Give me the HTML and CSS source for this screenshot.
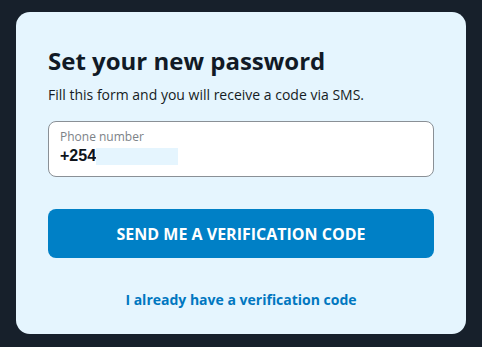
FILE: index.html
```html
<!DOCTYPE html>
<html>
<head>
<meta charset="utf-8">
<link rel="stylesheet" href="styles.css">
</head>
<body>
<div class="card">
  <h1 class="title">Set your new password</h1>
  <p class="subtitle">Fill this form and you will receive a code via SMS.</p>
  <div class="field">
    <span class="label">Phone number</span>
    <div class="value"><span class="prefix">+254</span><span class="fill"></span></div>
  </div>
  <button class="primary">SEND ME A VERIFICATION CODE</button>
  <a class="link">I already have a verification code</a>
</div>
</body>
</html>
```
FILE: styles.css
```css
html, body {
  margin: 0;
  background: #17202b;
  height: 100%;
}
body {
  padding: 12px 16px 13px;
  box-sizing: border-box;
  font-family: "Open Sans", sans-serif;
}
.card {
  background: #e5f5fe;
  border-radius: 14px;
  height: 322px;
  box-sizing: border-box;
  padding: 33px 32px 0;
  display: flex;
  flex-direction: column;
}
.title {
  margin: 0;
  font-size: 24px;
  line-height: 32px;
  font-weight: 700;
  color: #111a26;
}
.subtitle {
  margin: 8px 0 0;
  font-size: 14px;
  line-height: 20px;
  color: #151c24;
}
.field {
  margin-top: 16px;
  height: 56px;
  box-sizing: border-box;
  border: 1px solid #8a9096;
  border-radius: 8px;
  background: #fff;
  padding: 7px 11px 0;
  display: flex;
  flex-direction: column;
}
.label {
  font-size: 12px;
  line-height: 16px;
  color: #7c8287;
}
.value {
  margin-top: 2px;
  display: flex;
  align-items: center;
  height: 18px;
}
.prefix {
  font-family: "Liberation Sans", Arial, sans-serif;
  font-weight: 700;
  font-size: 16px;
  color: #0e141b;
}
.fill {
  display: block;
  width: 82px;
  height: 17px;
  background: #e5f5fe;
}
.primary {
  margin-top: 32px;
  height: 49px;
  border: 0;
  border-radius: 8px;
  background: #0080c6;
  color: #fff;
  font-family: "Open Sans", sans-serif;
  font-weight: 700;
  font-size: 16px;
}
.link {
  margin-top: 32px;
  text-align: center;
  font-size: 14px;
  line-height: 20px;
  font-weight: 700;
  color: #0077c0;
}
```
